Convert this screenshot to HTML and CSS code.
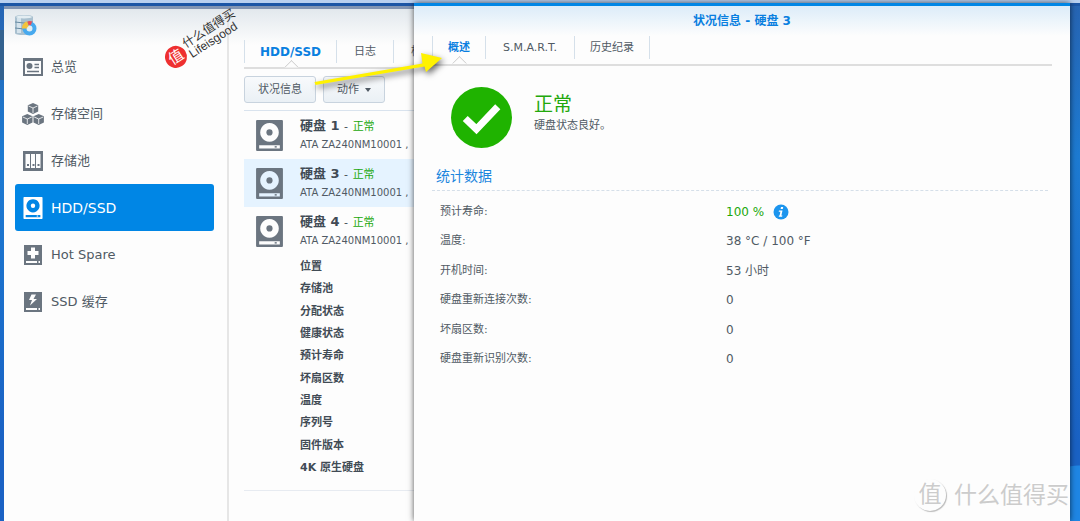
FILE: index.html
```html
<!DOCTYPE html>
<html lang="zh-CN">
<head>
<meta charset="utf-8">
<title>存储空间管理员</title>
<link rel="stylesheet" href="styles.css">
</head>
<body>
<svg class="sprite" aria-hidden="true">
  <symbol id="disk" viewBox="0 0 26 30">
    <path fill="currentColor" fill-rule="evenodd" d="M1 0h24q1 0 1 1v28q0 1-1 1H1q-1 0-1-1V1q0-1 1-1zM13 3a9 9 0 1 0 .01 0zM3 24.500v3h20v-3z"/>
    <circle cx="13" cy="12" r="3" fill="currentColor"/>
    <path fill="currentColor" d="M18 25.300h2v1.400h-2z"/>
  </symbol>
</svg>
<div class="desktop">
  <div class="taskbar"></div>
  <div class="window">
    <aside class="sidebar">
      <svg class="app-icon" viewBox="0 0 22 22" aria-hidden="true">
        <path fill="#a9c0cf" d="M0 2q0-2 9-2t9 2v16q0 2-9 2t-9-2z"/>
        <path fill="#d5e3ec" d="M2 3h4v15H2z"/>
        <ellipse cx="9" cy="2" rx="8" ry="1.500" fill="#e3edf2"/>
        <path d="M0 7q9 2 18 0M0 13q9 2 18 0" fill="none" stroke="#688ba2"/>
        <circle cx="14.500" cy="13.500" r="5" fill="#e3edf2" stroke="#47a9ee" stroke-width="4"/>
        <path d="M9.500 13.500A5 5 0 0 1 13 8.700" fill="none" stroke="#f3c33c" stroke-width="5"/>
        <path d="M13 8.300a5.500 5.500 0 0 1 3.500 0" fill="none" stroke="#e84e57" stroke-width="4"/>
      </svg>
      <nav class="nav">
        <a class="nav-item" href="#overview">
          <svg class="nav-icon" viewBox="0 0 22 22" aria-hidden="true"><path fill="none" stroke="currentColor" stroke-width="2" d="M2 3h18v16H2z"/><path fill="currentColor" d="M1 2h20v3H1z"/><circle cx="7.500" cy="10" r="3" fill="currentColor"/><path d="M12.500 8.500H17M12.500 11.500H17M5 15.500h12" stroke="currentColor" stroke-width="1.500"/></svg>
          总览</a>
        <a class="nav-item" href="#volume">
          <svg class="nav-icon" viewBox="0 0 22 22" aria-hidden="true"><g id="cube"><path fill="currentColor" d="M11 0l5.200 2.300v6.200L11 11 5.800 8.500V2.300z"/><path d="M6.500 3L11 5l4.500-2M11 5v5" stroke="#fff" stroke-width=".8" fill="none"/></g><use href="#cube" x="-5.700" y="11"/><use href="#cube" x="5.700" y="11"/></svg>
          存储空间</a>
        <a class="nav-item" href="#pool">
          <svg class="nav-icon" viewBox="0 0 22 22" aria-hidden="true"><path fill="currentColor" fill-rule="evenodd" d="M1 1h20v20H1zM3.500 4v14H8V4zM9 4v14h4V4zM14 4v14h4.500V4z"/><path fill="currentColor" d="M5 14h2v2H5zM10.500 14h2v2h-2zM15.500 14h2v2h-2z"/></svg>
          存储池</a>
        <a class="nav-item active" href="#disks" aria-current="page">
          <svg class="nav-icon" aria-hidden="true"><use href="#disk"/></svg>
          HDD/SSD</a>
        <a class="nav-item" href="#spare">
          <svg class="nav-icon" viewBox="0 0 22 22" aria-hidden="true"><path fill="currentColor" fill-rule="evenodd" d="M2 1h18v20H2zM9 3.500V7H5.500v4H9v3.500h4V11h3.500V7H13V3.500zM4 17v2h14v-2z"/><path fill="currentColor" d="M15 17h1.500v2H15z"/></svg>
          Hot Spare</a>
        <a class="nav-item" href="#cache">
          <svg class="nav-icon" viewBox="0 0 22 22" aria-hidden="true"><path fill="currentColor" fill-rule="evenodd" d="M2 1h18v20H2zM9.500 3.500L7 9h3l-2 5.500L15 8h-3.500L14 3.500zM4 17v2h14v-2z"/><path fill="currentColor" d="M15 17h1.500v2H15z"/></svg>
          SSD 缓存</a>
      </nav>
    </aside>
    <main class="content">
      <div class="tabs" role="tablist">
        <button class="tab active" role="tab" aria-selected="true">HDD/SSD</button>
        <button class="tab" role="tab">日志</button>
        <button class="tab" role="tab">检查</button>
      </div>
      <div class="toolbar">
        <button class="button">状况信息</button>
        <button class="button">动作 <span class="caret"></span></button>
      </div>
      <div class="disks">
        <article class="disk">
          <svg class="disk-icon" aria-hidden="true"><use href="#disk"/></svg>
          <div class="disk-text"><h2 class="disk-name">硬盘 1 <span class="dash">-</span> <span class="ok">正常</span></h2><p class="disk-model">ATA ZA240NM10001 ,</p></div>
        </article>
        <article class="disk selected">
          <svg class="disk-icon" aria-hidden="true"><use href="#disk"/></svg>
          <div class="disk-text"><h2 class="disk-name">硬盘 3 <span class="dash">-</span> <span class="ok">正常</span></h2><p class="disk-model">ATA ZA240NM10001 ,</p></div>
        </article>
        <article class="disk">
          <svg class="disk-icon" aria-hidden="true"><use href="#disk"/></svg>
          <div class="disk-text"><h2 class="disk-name">硬盘 4 <span class="dash">-</span> <span class="ok">正常</span></h2><p class="disk-model">ATA ZA240NM10001 ,</p></div>
        </article>
        <ul class="details">
          <li>位置</li><li>存储池</li><li>分配状态</li><li>健康状态</li><li>预计寿命</li><li>坏扇区数</li><li>温度</li><li>序列号</li><li>固件版本</li><li>4K 原生硬盘</li>
        </ul>
      </div>
    </main>
  </div>

  <section class="dialog" role="dialog" aria-labelledby="dialog-title">
    <h1 class="dialog-title" id="dialog-title">状况信息 - 硬盘 3</h1>
    <div class="tabs dialog-tabs" role="tablist">
      <button class="tab active" role="tab" aria-selected="true">概述</button>
      <button class="tab" role="tab">S.M.A.R.T.</button>
      <button class="tab last" role="tab">历史纪录</button>
    </div>
    <div class="health">
      <svg class="health-icon" viewBox="0 0 60 60" aria-hidden="true"><circle cx="30" cy="30" r="30" fill="#1fb300"/><path d="M14 31L25 41.500 46 19.500" fill="none" stroke="#fff" stroke-width="7"/></svg>
      <div><p class="health-state">正常</p><p class="health-text">硬盘状态良好。</p></div>
    </div>
    <h2 class="section-title">统计数据</h2>
    <dl class="stats">
      <dt>预计寿命:</dt><dd class="good">100 % <svg class="info" viewBox="0 0 16 16" aria-hidden="true"><circle cx="8" cy="8" r="7.500" fill="#1c95ee"/><path d="M8 3h2.200l-.4 2H7.600zM6 6.500h3.500L8.400 11.500h1l-.3 1.200H5.700L6 11.500h.6l.8-3.800H5.700z" fill="#fff"/></svg></dd>
      <dt>温度:</dt><dd>38 °C / 100 °F</dd>
      <dt>开机时间:</dt><dd>53 小时</dd>
      <dt>硬盘重新连接次数:</dt><dd>0</dd>
      <dt>坏扇区数:</dt><dd>0</dd>
      <dt>硬盘重新识别次数:</dt><dd>0</dd>
    </dl>
  </section>

  <svg class="arrow" viewBox="0 0 140 50" aria-hidden="true"><path fill="#fff200" d="M8.500 34L116.500 15.500 115 5l21 5L120 24l-1.500-5.500L9.500 37z"/></svg>
  <div class="stamp">
    <span class="stamp-badge">值</span>
    <span class="stamp-text">什么值得买<br>Lifeisgood</span>
  </div>
  <div class="watermark"><span class="watermark-badge">值</span>什么值得买</div>
</div>
</body>
</html>
```
FILE: styles.css
```css
* { box-sizing: border-box; }
body, h1, h2, p, ul, dl, dd { margin: 0; padding: 0; }
body {
  font: 11px/16px "DejaVu Sans", "Noto Sans CJK SC", sans-serif;
  color: #505a64;
}
button { font: inherit; color: inherit; cursor: pointer; }
.sprite { position: absolute; width: 0; height: 0; }

.desktop {
  position: relative;
  display: flex;
  flex-direction: column;
  min-height: 100vh;
  overflow: hidden;
  padding-left: 4px;
  background:
    linear-gradient(#34628f, #34628f) 0 30px / 4px 50px no-repeat,
    radial-gradient(circle at 100% 100%, #1f86e4 0 55px, transparent 56px) no-repeat,
    linear-gradient(#2764b2, #1d7bd2 30%, #1a62c4 85%);
}
.taskbar {
  height: 6px;
  margin-left: -4px;
  background: #b9d0f0;
  border-bottom: 3px solid #1c56a6;
}
.window {
  flex: 1;
  display: flex;
  margin-right: 10px;
  background: linear-gradient(#e2e8ed, #fdfdfd 36px);
  border-top: 3px solid #8295b3;
}
.sidebar {
  flex: 0 0 225px;
  padding: 6px 13px 0 11px;
  border-right: 2px solid #e6e6e6;
}
.app-icon { display: block; width: 22px; height: 22px; }
.nav { padding-top: 6px; }
.nav-item {
  display: flex;
  align-items: center;
  gap: 7px;
  height: 47px;
  padding: 0 7px;
  border-radius: 3px;
  font-size: 13px;
  color: #505a64;
  text-decoration: none;
}
.nav-icon { width: 22px; height: 22px; color: #6b7580; }
.nav-item.active { background: #0086e5; color: #fff; font-size: 14px; }
.active .nav-icon { color: #fff; }

.content { flex: 1; padding: 31px 15px 0; }
.tabs {
  display: flex;
  padding-bottom: 4px;
  border-bottom: 2px solid #dedede;
}
.tab {
  position: relative;
  height: 23px;
  padding: 0 17px;
  background: none;
  border: 0;
  border-left: 1px solid #d5e0ea;
}
.tab.last { border-right: 1px solid #d5e0ea; }
.tab.active { padding: 0 15px; font-size: 12px; font-weight: bold; color: #0a7fe0; }
.tab.active::after {
  content: "";
  position: absolute;
  left: 50%;
  bottom: -10px;
  width: 10px;
  height: 10px;
  margin-left: -5px;
  background: #fdfdfd;
  border: solid #d0d0d0;
  border-width: 1px 0 0 1px;
  transform: rotate(45deg);
  clip-path: polygon(0 0, 100% 0, 0 100%);
}
.toolbar { display: flex; gap: 7px; padding: 7px 0; }
.button {
  display: flex;
  align-items: center;
  gap: 6px;
  height: 27px;
  padding: 0 13px;
  background: linear-gradient(#f8fafc, #eaf0f5);
  border: 1px solid #c8d3de;
  border-radius: 3px;
}
.caret { border: 3px solid transparent; border-top: 4px solid #505a64; border-bottom: 0; }
.disks { border-top: 1px solid #d9e3ee; border-bottom: 1px solid #e7ebf1; }
.disk {
  display: flex;
  align-items: center;
  gap: 17px;
  height: 48px;
  padding-left: 12px;
}
.disk.selected { background: #e5f3ff; }
.disk-icon { width: 27px; height: 31px; color: #6b7580; }
.disk-text { padding-bottom: 2px; }
.disk-name { font-size: 13px; line-height: 20px; color: #414b55; }
.dash, .ok { font-size: 11px; font-weight: normal; }
.ok { color: #22a80c; }
.disk-model { font-size: 10px; line-height: 16px; }
.details {
  display: flex;
  flex-direction: column;
  justify-content: space-around;
  min-height: 223px;
  margin: 1px 0 11px;
  padding-left: 56px;
  list-style: none;
  font-weight: bold;
  color: #414b55;
}

.dialog {
  position: absolute;
  top: 3px;
  bottom: 0;
  left: 414px;
  right: 10px;
  padding: 0 18px;
  background: linear-gradient(#dcecf9, #fdfdfd 30px);
  border-top: 3px solid #0086e5;
  box-shadow: 0 0 6px #000a;
}
.dialog-title {
  padding: 7px 0 7px;
  text-align: center;
  font-size: 12px;
  line-height: 16px;
  color: #0a7fe0;
}
.dialog-tabs { padding-bottom: 5px; }
.dialog-tabs .tab { padding: 0 17px; }
.dialog-tabs .tab.active { padding: 0 15px; font-size: 11px; }
.dialog-tabs .tab.last { padding: 0 15px; }
.health { display: flex; gap: 22px; padding: 21px 19px 0; }
.health-icon { width: 61px; height: 61px; }
.health-state { padding-top: 4px; font-size: 19px; line-height: 26px; color: #22a80c; }
.health-text { line-height: 18px; }
.section-title {
  margin: 18px 4px 6px 0;
  padding: 0 4px 4px;
  border-bottom: 1px dashed #d5dfe9;
  font-size: 14px;
  font-weight: normal;
  line-height: 20px;
  color: #1c86dd;
}
.stats {
  display: grid;
  grid-template-columns: 286px 1fr;
  align-items: center;
  min-height: 177px;
  padding-left: 8px;
}
.stats dd { display: flex; align-items: center; gap: 9px; font-size: 12px; }
.stats .good { color: #22a80c; }
.info { width: 16px; height: 16px; }

.arrow {
  position: absolute;
  left: 306px;
  top: 48px;
  width: 140px;
  height: 50px;
  overflow: visible;
  filter: drop-shadow(2px 3px 3px #0009);
}
.stamp {
  position: absolute;
  left: 160px;
  top: 28px;
  display: flex;
  align-items: center;
  gap: 2px;
  transform: rotate(-33deg);
  color: #333;
}
.stamp-badge {
  width: 22px;
  border-radius: 50%;
  background: #ee3030;
  color: #fff;
  font-size: 15px;
  line-height: 22px;
  text-align: center;
}
.stamp-text { font: 12px/12px "Liberation Sans", "Noto Sans CJK SC", sans-serif; white-space: nowrap; }
.watermark {
  position: absolute;
  right: 11px;
  bottom: 10px;
  display: flex;
  align-items: center;
  gap: 8px;
  font-size: 23px;
  line-height: 32px;
  color: #ccc;
  text-shadow: -1px -1px 0 #fff;
}
.watermark-badge {
  width: 32px;
  height: 32px;
  border-radius: 50%;
  box-shadow: 1px 1px 1px #bbb;
  line-height: 30px;
  text-align: center;
}
```
